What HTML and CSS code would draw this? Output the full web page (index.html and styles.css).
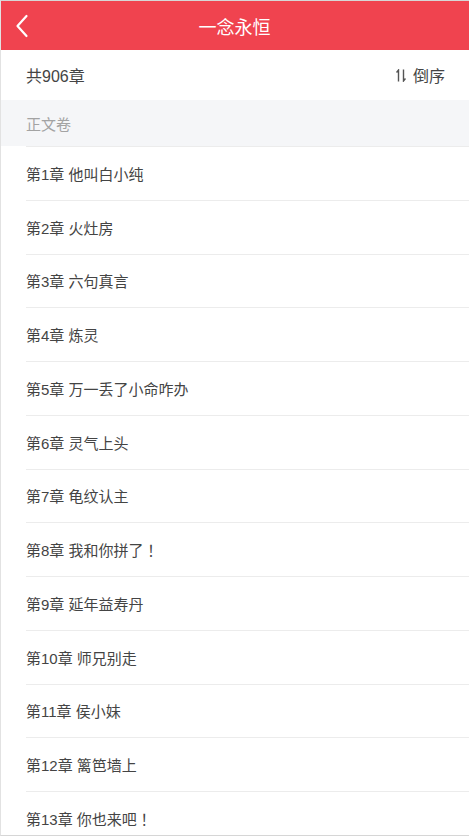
FILE: index.html
```html
<!DOCTYPE html>
<html lang="zh-CN">
<head>
<meta charset="utf-8">
<title>一念永恒</title>
<link rel="stylesheet" href="styles.css">
</head>
<body>
<div class="page">
  <header class="topbar">
    <span class="back">
      <svg width="14" height="24" viewBox="0 0 14 24"><path d="M11.5 2 L2.5 12 L11.5 22" fill="none" stroke="#fff" stroke-width="2.2" stroke-linecap="round" stroke-linejoin="round"/></svg>
    </span>
    <h1 class="title">一念永恒</h1>
  </header>
  <div class="summary">
    <span class="count">共906章</span>
    <span class="sort">
      <svg width="10" height="13" viewBox="0 0 10 13"><path d="M2.5 12.5 V1 L0.5 3.5 M7.5 0.5 V12 L9.5 9.5" fill="none" stroke="#555" stroke-width="1.4"/></svg>
      倒序
    </span>
  </div>
  <div class="volume">正文卷</div>
  <ul class="chapters">
    <li>第1章 他叫白小纯</li>
    <li>第2章 火灶房</li>
    <li>第3章 六句真言</li>
    <li>第4章 炼灵</li>
    <li>第5章 万一丢了小命咋办</li>
    <li>第6章 灵气上头</li>
    <li>第7章 龟纹认主</li>
    <li>第8章 我和你拼了<span class="fw">！</span></li>
    <li>第9章 延年益寿丹</li>
    <li>第10章 师兄别走</li>
    <li>第11章 侯小妹</li>
    <li>第12章 篱笆墙上</li>
    <li>第13章 你也来吧<span class="fw">！</span></li>
  </ul>
</div>
</body>
</html>
```
FILE: styles.css
```css
html, body {
  margin: 0;
  padding: 0;
  background: #fff;
}
body {
  font-family: "Liberation Sans", "Noto Sans CJK SC", sans-serif;
  color: #444;
}
.page {
  height: 834px;
  overflow: hidden;
  border-top: 1px solid #d6d6d6;
  border-bottom: 1px solid #d6d6d6;
  border-left: 1px solid #e2e2e2;
}
.topbar {
  height: 49px;
  background: #f0434f;
  display: flex;
  align-items: center;
  justify-content: center;
  position: relative;
  margin-left: -1px;
}
.back {
  position: absolute;
  left: 15px;
  top: 13px;
  display: flex;
}
.title {
  margin: 0;
  font-size: 18px;
  font-weight: normal;
  color: #fff;
}
.summary {
  height: 50px;
  display: flex;
  align-items: center;
  justify-content: space-between;
  padding: 0 24px 0 25px;
  font-size: 16px;
}
.sort {
  display: flex;
  align-items: center;
  gap: 7px;
}
.volume {
  height: 46px;
  background: #f5f6f8;
  display: flex;
  align-items: center;
  padding-left: 25px;
  font-size: 15px;
  color: #a3a3a3;
}
.chapters {
  list-style: none;
  margin: 0;
  padding: 0 0 0 25px;
}
.chapters li {
  height: 52.75px;
  border-top: 1px solid #ececec;
  display: flex;
  align-items: center;
  font-size: 15px;
  color: #444;
}
.fw {
  font-family: "Noto Sans CJK JP", sans-serif;
}
```
